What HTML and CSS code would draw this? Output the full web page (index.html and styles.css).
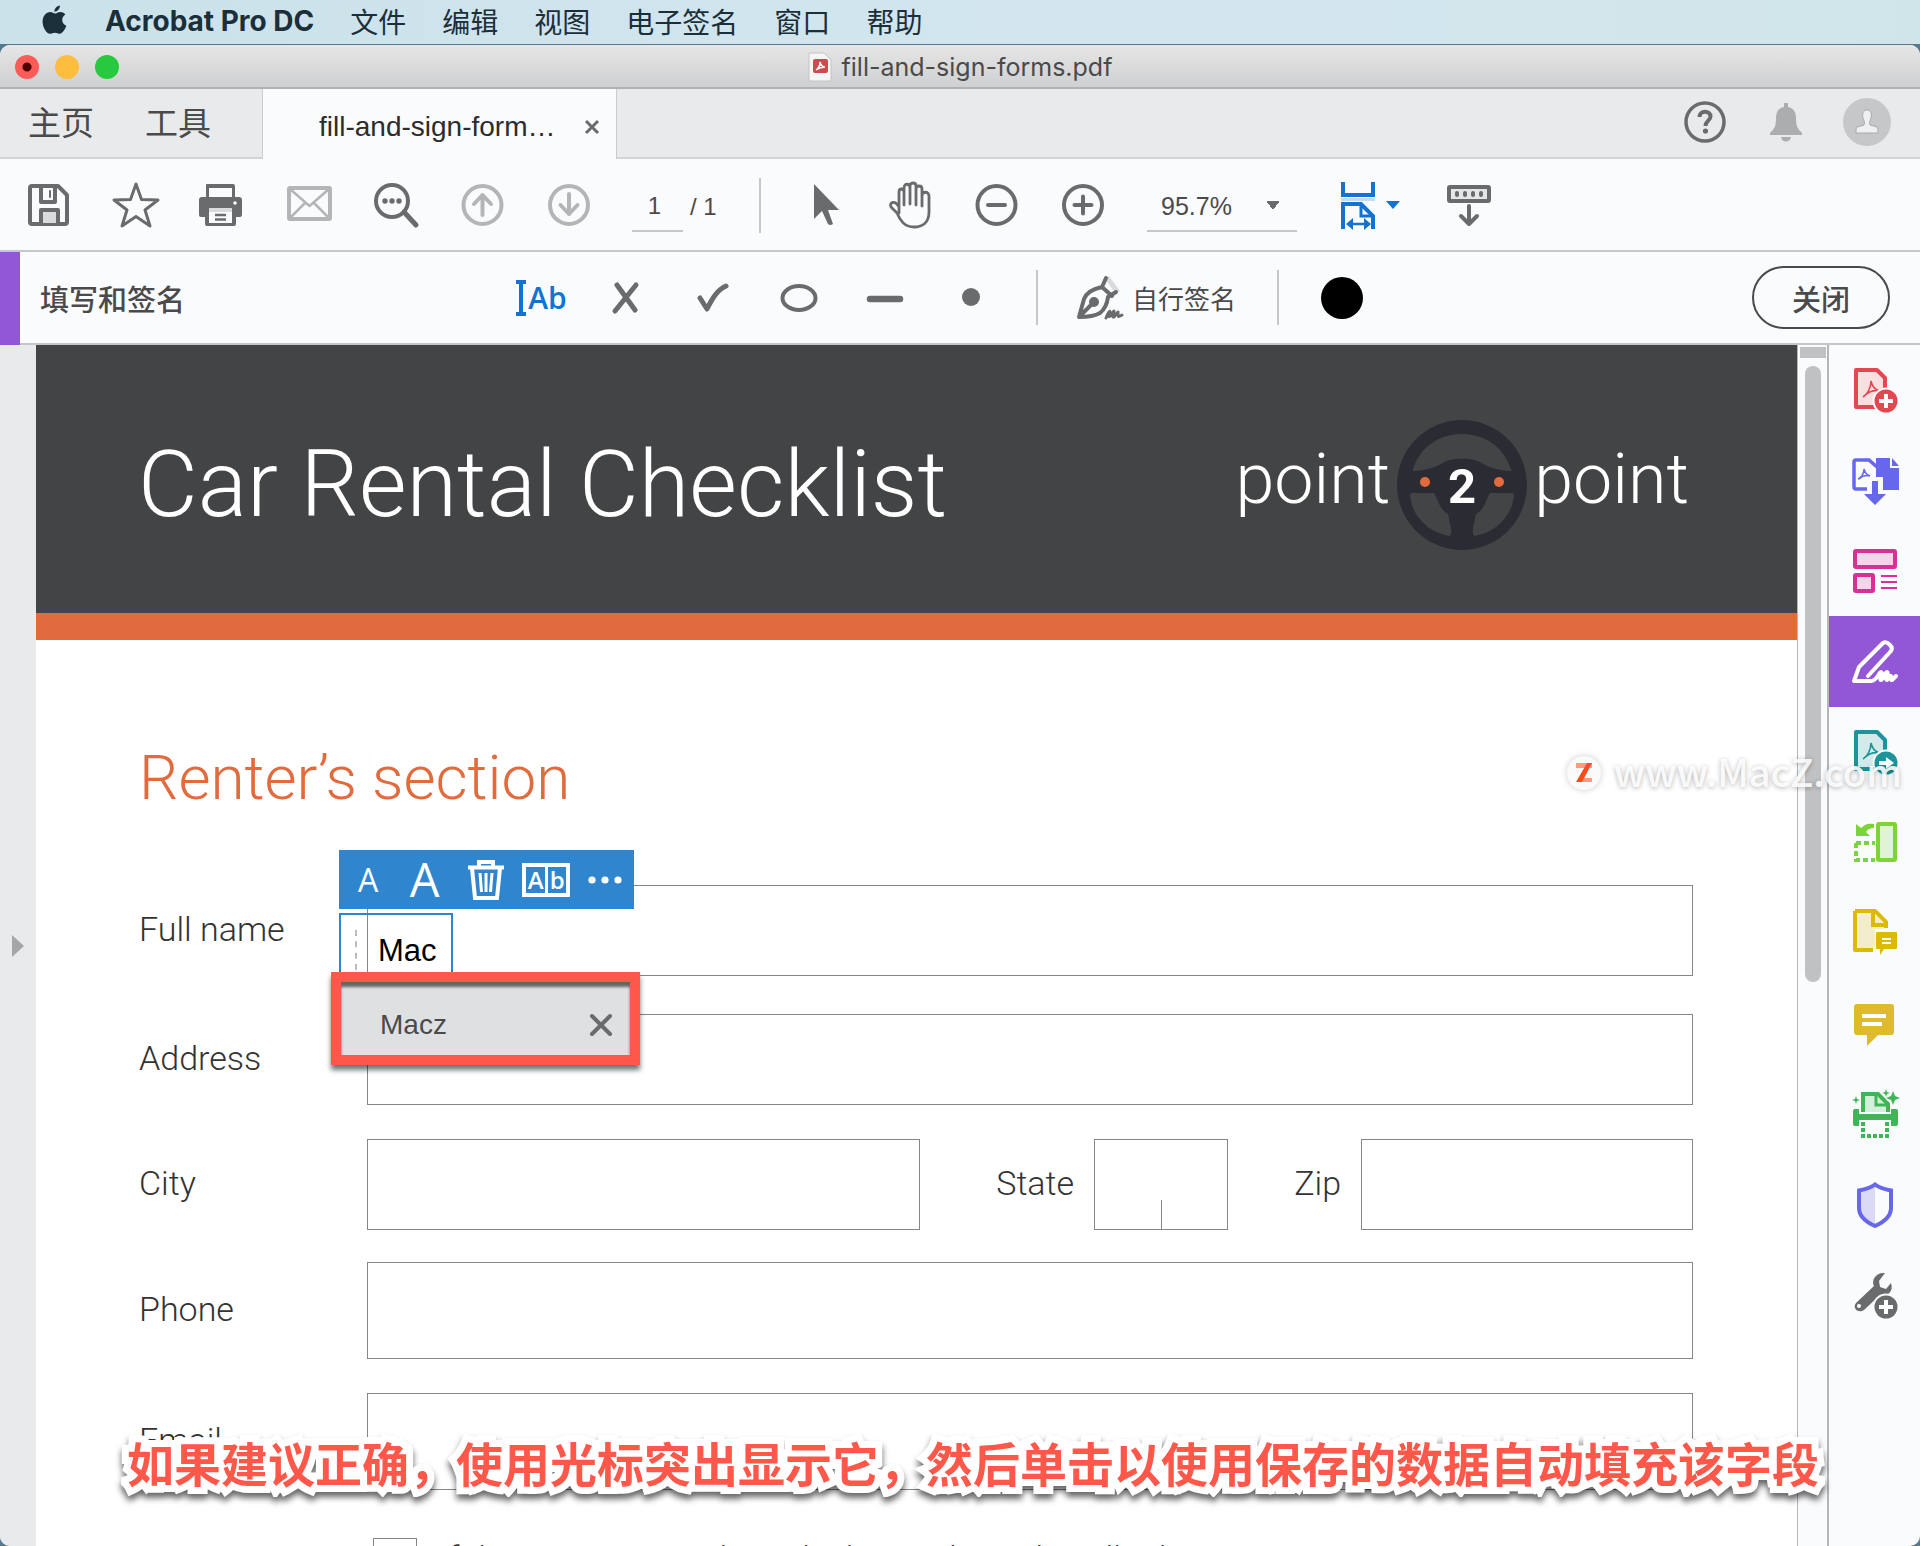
FILE: index.html
```html
<!DOCTYPE html>
<html lang="zh-CN">
<head>
<meta charset="utf-8">
<title>fill-and-sign-forms.pdf</title>
<link rel="stylesheet" href="styles.css">
</head>
<body>
<nav class="menubar">
  <svg class="apple" viewBox="0 0 26 30" aria-hidden="true"><path d="M13.500 8.300c1.500 0 3-1.700 5.600-1.700 2.400 0 4.200 1.200 5.200 2.800-4.800 3-4.200 9.500 1 11.700-1.200 3.600-4 8.300-6.900 8.300-1.800 0-2.700-1.100-5-1.100s-3.300 1.100-5 1.100C4.600 29.400.6 22.600.6 16.900c0-6.200 3.900-10.200 8-10.200 2.200 0 3.700 1.600 4.900 1.600zM12.900 6.500C12.700 3.300 15.600.4 18.600 0c.4 3.300-2.600 6.500-5.700 6.500z" fill="#1b2f3a"/></svg>
  <b>Acrobat Pro DC</b><a href="#">文件</a><a href="#">编辑</a><a href="#">视图</a><a href="#">电子签名</a><a href="#">窗口</a><a href="#">帮助</a>
</nav>
<div class="window">
  <header class="titlebar">
    <div class="lights"><i class="red"></i><i class="yellow"></i><i class="green"></i></div>
    <div class="doc-title">
      <svg width="24" height="30" viewBox="0 0 24 30" aria-hidden="true"><path d="M1 1h15l7 7v21H1z" fill="#f5f5f5" stroke="#c4c4c4"/><rect x="5" y="7" width="15" height="14" rx="2" fill="#cf4a4e"/><path d="M8 18c3-2 4-5 4-8 1 4 3 5 5 5-3 0-6 1-9 3z" fill="none" stroke="#fff" stroke-width="1.500"/></svg>
      <span>fill-and-sign-forms.pdf</span>
    </div>
  </header>

  <div class="tabs">
    <div class="tabs-home"><a href="#">主页</a><a href="#">工具</a></div>
    <div class="tab"><span>fill-and-sign-form…</span>
      <button aria-label="Close tab"><svg width="16" height="16" viewBox="0 0 16 16"><path d="M2 2l12 12M14 2L2 14" stroke="#6a6b6c" stroke-width="3"/></svg></button>
    </div>
    <div class="tabs-right">
      <button aria-label="Help"><svg class="ic" viewBox="0 0 48 48"><circle cx="24" cy="24" r="19" fill="none" stroke="#6a6b6c" stroke-width="3.500"/><path d="M18.500 19c0-7 11-7 11-.5 0 4-5 4.500-5 9.500" fill="none" stroke="#6a6b6c" stroke-width="4"/><circle cx="24.500" cy="33" r="2.600" fill="#6a6b6c"/></svg></button>
      <button aria-label="Notifications"><svg class="ic" viewBox="0 0 48 48"><path d="M22 5h4v4c6 1 8 6 8 11 0 9 2 11 6 15v2H8v-2c4-4 6-6 6-15 0-5 2-10 8-11zM19 39h10c-1 6-9 6-10 0z" fill="#acadaf"/></svg></button>
      <button aria-label="Account"><svg class="ic" viewBox="0 0 48 48"><circle cx="24" cy="24" r="24" fill="#c6c7c9"/><path d="M24 12c-4 0-5 4-4 8 1 3 2 4 1 7l-7 2c-1 1-1 3-1 6h22c0-3 0-5-1-6l-7-2c-1-3 0-4 1-7 1-4 0-8-4-8z" fill="#eff0f1" stroke="#aaa"/></svg></button>
    </div>
  </div>

  <div class="toolbar">
    <div class="group">
      <button aria-label="Save"><svg class="ic g" viewBox="0 0 48 48"><path d="M8 5h26l9 9v27a2 2 0 0 1-2 2H8a2 2 0 0 1-2-2V7a2 2 0 0 1 2-2z"/><path d="M17 6v15h14V6M17 43V29h17v14"/><path d="M19 31h13v11H19z" fill="#dadbdc" stroke="none"/><path d="M26 10v6" stroke-width="2"/></svg></button>
      <button aria-label="Star"><svg class="ic g" viewBox="0 0 48 48"><path d="M25 3l5.500 15.500L47 19 34 29l5 16-14-9.500L11 45l5-16L3 19l16.500-.5z" stroke-width="3"/></svg></button>
      <button aria-label="Print"><svg class="ic" viewBox="0 0 48 48"><path d="M8 4q0-1 1-1h26q2 0 2 2v11h4a3 3 0 0 1 3 3v15a2 2 0 0 1-2 2h-4v7a2 2 0 0 1-2 2H9a2 2 0 0 1-2-2v-7H3a2 2 0 0 1-2-2V19a3 3 0 0 1 3-3h4V5z" fill="#6a6b6c"/><path d="M11 7h23v9H11zM11 28h23v14H11z" fill="#fafbfd"/><path d="M11 27h23v4H11z" fill="#dadbdc"/><path d="M17 34h11M17 38.500h11" stroke="#6a6b6c" stroke-width="2.500"/><circle cx="37" cy="22" r="1.800" fill="#fff"/></svg></button>
      <button aria-label="Mail"><svg class="ic g pale" viewBox="0 0 48 48"><rect x="4" y="7" width="41" height="31" rx="1"/><path d="M5 8l19.500 17L44 8M5 37l15-15M44 37L29 22" stroke-width="2.500"/></svg></button>
      <button aria-label="Search"><svg class="ic g" viewBox="0 0 48 48"><circle cx="20" cy="20" r="16" stroke-width="4"/><path d="M32 31l12 13" stroke-width="5"/><g fill="#6a6b6c" stroke="none"><circle cx="13" cy="20" r="2.700"/><circle cx="20" cy="20" r="2.700"/><circle cx="27" cy="20" r="2.700"/></g></svg></button>
      <button aria-label="Previous page"><svg class="ic g pale" viewBox="0 0 48 48"><circle cx="23.500" cy="24" r="19"/><path d="M23.500 34V14M15 23l8.500-9 8.500 9" stroke-width="4"/></svg></button>
      <button aria-label="Next page"><svg class="ic g pale" viewBox="0 0 48 48"><circle cx="23" cy="24" r="19"/><path d="M23 13v20M14.500 24l8.500 9 8.500-9" stroke-width="4"/></svg></button>
    </div>
    <div class="pager"><input aria-label="Page" value="1"><span>/ 1</span></div>
    <div class="sep"></div>
    <div class="group">
      <button aria-label="Select"><svg class="ic" viewBox="0 0 48 48"><path d="M13 3v35l8-8 6 13q2 2 5 0l-5-14h11z" fill="#6a6b6c"/></svg></button>
      <button aria-label="Hand"><svg class="ic g" viewBox="0 0 48 48"><path d="M12 28V11c0-4 5-4 5 0v13V7c0-5 6-5 6 0v16V5c0-4 6-4 6 0v19V8c0-4 6-4 6 0v17V15c0-5 7-5 7 0v16c0 10-6 15-15 15-10 0-14-7-17-14L4 26c-2-5 4-7 8 0v6" stroke-width="2.800"/></svg></button>
      <button aria-label="Zoom out"><svg class="ic g" viewBox="0 0 48 48"><circle cx="23.500" cy="24" r="19"/><path d="M15 24h17" stroke-width="4"/></svg></button>
      <button aria-label="Zoom in"><svg class="ic g" viewBox="0 0 48 48"><circle cx="24" cy="24" r="19"/><path d="M15.500 24h17M24 15.500v17" stroke-width="4"/></svg></button>
    </div>
    <select class="zoom" aria-label="Zoom level"><option>95.7%</option></select>
    <button class="fit" aria-label="Fit width"><svg width="64" height="48" viewBox="0 0 64 48"><path d="M6 1v13h30V1M6 48V23h18l12 12v13" fill="none" stroke="#1473d0" stroke-width="4"/><path d="M4 17h34v3H4z" fill="#c5dcf2"/><path d="M24 23v12h12" fill="none" stroke="#1473d0" stroke-width="3"/><path d="M14 43h14" stroke="#1473d0" stroke-width="2.500"/><path d="M16 37v12l-7-6zM27 37v12l7-6z" fill="#1473d0"/><path d="M49 20h14l-7 8z" fill="#1473d0"/></svg></button>
    <button class="keys" aria-label="Toolbar"><svg class="ic g" viewBox="0 0 48 48"><rect x="3" y="6" width="40" height="14" rx="1" fill="#e4e5e6"/><path d="M11 12v2M19 12v2M27 12v2M35 12v2" stroke-width="4"/><path d="M23 25v18M15 35l8 8 8-8"/></svg></button>
  </div>

  <div class="signbar">
    <h2>填写和签名</h2>
    <div class="group">
      <button class="add-text" aria-label="Add text"><svg width="12" height="38" viewBox="0 0 12 38"><path d="M1 3h10M1 35h10M6 3v32" stroke="#1473d0" stroke-width="4"/></svg>Ab</button>
      <button aria-label="Cross"><svg class="ic g" viewBox="0 0 48 48"><path d="M14 11l18 25M33 11L12 37" stroke-width="5"/></svg></button>
      <button aria-label="Check"><svg class="ic g" viewBox="0 0 48 48"><path d="M11 24l7 11C23 25 28 16 37 12" stroke-width="5"/></svg></button>
      <button aria-label="Circle"><svg class="ic g" viewBox="0 0 48 48"><ellipse cx="24" cy="24" rx="16.500" ry="12"/></svg></button>
      <button aria-label="Line"><svg class="ic g" viewBox="0 0 48 48"><path d="M9 25h30" stroke-width="6.500"/></svg></button>
      <button aria-label="Dot"><svg class="ic" viewBox="0 0 48 48"><circle cx="24" cy="23" r="9" fill="#6a6b6c"/></svg></button>
    </div>
    <div class="sep"></div>
    <button class="self-sign"><svg class="ic g" viewBox="0 0 48 48"><path d="M29 5l11 15 4-3L33 2z" fill="#dadbdc" stroke="none"/><path d="M30 4l-4 9C16 15 10 20 8 25L3 43c7 0 16-1 21-4 5-4 7-8 8-16l8-5M26 13l10 9M5 41l12-12" /><circle cx="18" cy="28" r="3" fill="#6a6b6c"/><path d="M30 44c2-5 4-8 4-6s-3 6 0 4l4-5c1 1-3 7 0 6l4-5c0 4-1 6 4 3" stroke-width="3"/></svg>自行签名</button>
    <div class="sep"></div>
    <button class="swatch" aria-label="Color"></button>
    <button class="close">关闭</button>
  </div>

  <main class="main">
    <button class="drawer" aria-label="Expand"><svg width="12" height="22" viewBox="0 0 12 22"><path d="M0 0l12 11L0 22z" fill="#a5a6a8"/></svg></button>
    <article class="page">
      <header class="banner">
        <h1>Car Rental Checklist</h1>
        <div class="logo"><span>point</span>
          <svg width="130" height="130" viewBox="0 0 130 130"><path fill="#2b2b33" fill-rule="evenodd" d="M65 0a65 65 0 1 1 0 130A65 65 0 1 1 65 0zM16 51q15 0 28-7c8-7 34-7 42 0q13 7 28 7 1 1 0-2C107 28 89 14 65 14S23 28 16 49zM15 73c-4 0 0 10 0 12 5 16 20 28 37 31q3-1 2-8L51 94C42 89 41 79 37 73zM115 73c4 0 0 10 0 12-5 16-20 28-37 31q-3-1-2-8l3-14c9-5 10-15 14-21z"/><circle cx="28" cy="62" r="5" fill="#e26b3e"/><circle cx="102" cy="62" r="5" fill="#e26b3e"/><text x="65" y="83" text-anchor="middle" class="two">2</text></svg>
          <span>point</span></div>
      </header>
      <form class="form">
        <h2>Renter’s section</h2>
        <div class="row"><label for="name">Full name</label>
          <div class="cell"><input class="field" id="name">
            <div class="pop">
              <div class="pop-tools">
                <button type="button" class="a-small" aria-label="Smaller text">A</button><button type="button" class="a-big" aria-label="Larger text">A</button>
                <button type="button" aria-label="Delete"><svg width="38" height="42" viewBox="0 0 38 42" fill="none" stroke="#fff" stroke-width="4"><path d="M1 8.500h36M12 8V3h14v5M5 9l3 30h22l3-30"/><path d="M13 14l1.500 19M19 14v19M25 14l-1.500 19" stroke-width="3"/></svg></button>
                <button type="button" class="comb" aria-label="Comb"><span>A</span><span>b</span></button>
                <button type="button" aria-label="More"><svg width="34" height="8" viewBox="0 0 34 8" fill="#fff"><circle cx="4" cy="4" r="3.600"/><circle cx="17" cy="4" r="3.600"/><circle cx="30" cy="4" r="3.600"/></svg></button>
              </div>
              <div class="typed"><input aria-label="Typed text" value="Mac"></div>
              <div class="suggest"><span>Macz</span><button type="button" aria-label="Remove"><svg width="22" height="22" viewBox="0 0 22 22"><path d="M2 2l18 18M20 2L2 20" stroke="#6a6b6c" stroke-width="4" stroke-linecap="round"/></svg></button></div>
            </div>
          </div>
        </div>
        <div class="row gap-l"><label for="address">Address</label><input class="field" id="address"></div>
        <div class="row city gap-m"><label for="city">City</label><input class="field" id="city"><label class="mid" for="state">State</label><div class="state"><input class="field" id="state"></div><label class="mid" for="zip">Zip</label><input class="field" id="zip"></div>
        <div class="row tall gap-s"><label for="phone">Phone</label><input class="field" id="phone"></div>
        <div class="row tall gap-m"><label for="email">Email</label><input class="field" id="email"></div>
        <div class="agree"><input type="checkbox" id="agree"><label for="agree">If the renter is not the only driver, please list all other</label></div>
      </form>
    </article>
    <div class="scroll"><i class="split"></i><i class="thumb"></i></div>
    <aside class="rail">
      <button aria-label="Create PDF"><svg class="ic" viewBox="0 0 48 48"><path d="M5 4h21l8 8v29H5z" fill="#f9dfe0" stroke="#e34850" stroke-width="4" stroke-linejoin="round"/><path d="M12 31c4-2 8-9 8-16 1 5 4 9 9 10-5-1-11 0-16 5" fill="none" stroke="#e34850" stroke-width="1.600"/><circle cx="35" cy="35" r="13.500" fill="#fafbfd"/><circle cx="35" cy="35" r="11.500" fill="#e34850"/><path d="M28 35h14M35 28v14" stroke="#fff" stroke-width="4"/></svg></button>
      <button aria-label="Combine"><svg class="ic" viewBox="0 0 48 48"><path d="M16 32H5a2 2 0 0 1-2-2V5a2 2 0 0 1 2-2h13l8 7" fill="none" stroke="#6767ec" stroke-width="3.500"/><path d="M7 22c3-1 6-5 6-10 1 4 3 6 6 7-4-1-8 0-11 3" fill="none" stroke="#6767ec" stroke-width="1.500"/><path d="M25 1h14v10h9v22H32V20h-7zM41 1l7 8h-7z" fill="#6767ec"/><path d="M21 24h6v13h8L24 48 13 37h8z" fill="#6767ec"/></svg></button>
      <button aria-label="Organize"><svg class="ic" viewBox="0 0 48 48"><g fill="#f6d5ea" stroke="#dc2f95" stroke-width="4"><rect x="4" y="4" width="40" height="16" rx="1"/><rect x="4" y="28" width="18" height="16" rx="1"/></g><path d="M30 29h16M30 35h16M30 41h16" stroke="#dc2f95" stroke-width="2"/></svg></button>
      <button class="active" aria-label="Fill and sign"><svg class="ic" viewBox="0 0 48 48" fill="none" stroke="#fff" stroke-width="4" stroke-linejoin="round" stroke-linecap="round"><path d="M17 38L40 13q2-3-1-6-4-4-7-2L8 29 3 43h17c6 0 8-9 10-9s-2 8 0 8 4-8 6-8-2 8 0 8l3-4c2-2 0 5 2 4l4-4"/></svg></button>
      <button aria-label="Export PDF"><svg class="ic" viewBox="0 0 48 48"><path d="M5 4h21l8 8v29H5z" fill="#d3e9ea" stroke="#1c9499" stroke-width="4" stroke-linejoin="round"/><path d="M12 31c4-2 8-9 8-16 1 5 4 9 9 10-5-1-11 0-16 5" fill="none" stroke="#1c9499" stroke-width="1.600"/><circle cx="35" cy="35" r="13.500" fill="#fafbfd"/><circle cx="35" cy="35" r="11.500" fill="#1c9499"/><path d="M28 33h7v-4l8 6-8 6v-4h-7z" fill="#fff"/></svg></button>
      <button aria-label="Pages"><svg class="ic" viewBox="0 0 48 48"><rect x="27" y="5" width="17" height="36" rx="1" fill="#e0f3d3" stroke="#7dd33c" stroke-width="4"/><path d="M5 5l5 4c4-4 7-5 13-4v4c-4 0-6 1-8 4l4 4H5z" fill="#7dd33c"/><path d="M5 24v17h19M5 24h19" fill="none" stroke="#7dd33c" stroke-width="4" stroke-dasharray="5 3"/></svg></button>
      <button aria-label="Review"><svg class="ic" viewBox="0 0 48 48"><path d="M4 2h20l11 11v6M22 41H4V2" fill="none" stroke="#dcba00" stroke-width="4" stroke-linejoin="round"/><path d="M6 4h17l10 11v5H24v19H6z" fill="#f3edcc"/><path d="M22 3v13h12" fill="none" stroke="#dcba00" stroke-width="4"/><path d="M26 23h19q1 0 1 1v15q0 1-1 1H33l-4 6v-6h-3q-1 0-1-1V24z" fill="#dcba00"/><path d="M31 30h9M31 34h9" stroke="#fff" stroke-width="2"/></svg></button>
      <button aria-label="Comment"><svg class="ic" viewBox="0 0 48 48"><path d="M6 4h34q3 0 3 3v25q0 3-3 3H27L16 46V35H6q-3 0-3-3V7q0-3 3-3z" fill="#dfbb2c"/><path d="M11 16h24M11 24h20" stroke="#fff" stroke-width="4"/></svg></button>
      <button aria-label="Scan"><svg class="ic" viewBox="0 0 48 48"><path d="M12 22V4h15l10 10v8" fill="#d3efda" stroke="#40b558" stroke-width="4"/><path d="M25 4v11h11" fill="none" stroke="#40b558" stroke-width="3"/><path d="M3 19h5v5h32v-5h5q2 0 2 2v12q0 3-2 3h-5v-6H8v6H4q-2 0-2-2V21z" fill="#40b558"/><path d="M12 32v14h24V32" fill="none" stroke="#40b558" stroke-width="4" stroke-dasharray="4 2"/><path d="M42 1l2 5 5 2-5 2-2 5-2-5-5-2 5-2zM5 6l1 3 3 1-3 1-1 3-1-3-3-1 3-1zM35-1l1 3 3 1-3 1-1 3-1-3-3-1 3-1z" fill="#40b558"/></svg></button>
      <button aria-label="Protect"><svg class="ic" viewBox="0 0 48 48"><path d="M24 4v40C14 40 8 35 8 26V10c6 0 11-2 16-6z" fill="#dadaf7"/><path d="M24 3.500c5 4 10 5 16 6V27c0 9-7 14-16 18C15 41 8 36 8 27V9.500c6-1 11-2 16-6z" fill="none" stroke="#6767ec" stroke-width="4"/></svg></button>
      <button aria-label="More tools"><svg class="ic" viewBox="0 0 48 48"><path d="M34 2c-9-1-14 7-11 13L5 32c-4 5 2 11 8 7l16-15c7 2 14-3 11-12l-5 6-6-2-1-6z" fill="#6a6b6c"/><circle cx="8" cy="35" r="2" fill="#fff"/><circle cx="35" cy="36" r="13.500" fill="#fafbfd"/><circle cx="35" cy="36" r="11.500" fill="#6a6b6c"/><path d="M28 36h14M35 29v14" stroke="#fff" stroke-width="4"/></svg></button>
    </aside>
  </main>
</div>
<div class="watermark"><svg width="38" height="38" viewBox="0 0 38 38"><circle cx="19" cy="19" r="17" fill="#fafafa"/><path d="M11 9h16v5H11z M13 24h14v4H13z" fill="#ff9a80"/><path d="M22 9h5l-10 19h-6z" fill="#fb4a1c"/></svg><span>www.MacZ.com</span></div>
<p class="caption">如果建议正确，使用光标突出显示它，然后单击以使用保存的数据自动填充该字段</p>
</body>
</html>
```
FILE: styles.css
```css
* { box-sizing: border-box; }
body {
  margin: 0;
  height: 100vh;
  display: flex;
  flex-direction: column;
  overflow: hidden;
  position: relative;
  background: #55798f;
  color: #4a4a4b;
  font-family: "Liberation Sans", "Noto Sans CJK SC", sans-serif;
}
button, input, select { font: inherit; color: inherit; margin: 0; padding: 0; border: 0; background: none; outline: none; }
button { display: flex; align-items: center; justify-content: center; flex: none; }
a { color: inherit; text-decoration: none; }
h1, h2, p { margin: 0; font-weight: 300; }
svg { display: block; flex: none; overflow: visible; }
.ic { width: 48px; height: 48px; }
.g { fill: none; stroke: #6a6b6c; stroke-width: 4; stroke-linecap: round; stroke-linejoin: round; }
.pale { stroke: #b4b5b7; }

.menubar {
  height: 44px;
  flex: none;
  display: flex;
  align-items: center;
  gap: 36px;
  padding: 0 0 2px 42px;
  background: linear-gradient(90deg, #cbe2eb, #d3e6ee 60%, #d0e5ea);
  color: #1b2f3a;
  font: 28px "Inter", "Noto Sans CJK SC", sans-serif;
}
.apple { width: 25px; height: 30px; margin: 0 2px 2px 0; }
.menubar b { font-weight: 700; }

.window {
  flex: 1;
  min-height: 0;
  margin-top: 1px;
  display: flex;
  flex-direction: column;
  border-radius: 10px;
  overflow: hidden;
  background: #fafbfd;
}
.titlebar {
  height: 44px;
  flex: none;
  display: grid;
  grid-template-columns: 1fr auto 1fr;
  align-items: center;
  padding-top: 2px;
  background: linear-gradient(#e6e6e7, #cfd0d1);
  border-bottom: 2px solid #b0b1b3;
}
.lights { display: flex; gap: 16px; padding-left: 15px; }
.lights i { width: 24px; height: 24px; border-radius: 50%; }
.red { background: radial-gradient(circle, #4d0000 4px, #fc5b57 5px); }
.yellow { background: #fdbe3f; }
.green { background: #27c93f; }
.doc-title { display: flex; align-items: center; gap: 10px; font: 25px "Inter", sans-serif; }

.tabs { height: 70px; flex: none; display: flex; background: #e9eaeb; }
.tabs-home { width: 262px; display: flex; align-items: center; gap: 51px; padding: 0 0 5px 28px; font-size: 33px; border-bottom: 2px solid #d3d4d5; }
.tab {
  width: 355px;
  display: flex;
  align-items: center;
  justify-content: space-between;
  padding: 6px 16px 0 56px;
  background: #fafbfd;
  border: solid #cbccce;
  border-width: 0 1px;
  color: #2c2c2d;
  font-size: 28px;
}
.tabs-right { flex: 1; display: flex; justify-content: flex-end; align-items: center; gap: 33px; padding: 0 29px 2px 0; border-bottom: 2px solid #d3d4d5; }

.toolbar, .signbar { height: 93px; flex: none; display: flex; align-items: center; border-bottom: 2px solid #c6c7c9; }
.toolbar { padding: 1px 0 0 24px; }
.group { display: flex; gap: 39px; }
.group button { width: 48px; height: 48px; }
.pager { display: flex; align-items: center; gap: 7px; margin-left: 38px; font-size: 24px; }
.pager input { width: 51px; height: 54px; padding: 4px 6px 0 0; text-align: center; border-bottom: 2px solid #c6c7c9; }
.pager span { width: 29px; padding-top: 4px; white-space: nowrap; }
.sep { width: 2px; height: 55px; flex: none; background: #c6c7c9; }
.toolbar .sep { margin: 0 40px; }
.toolbar .sep + .group { gap: 38px; }
.zoom {
  width: 150px;
  height: 54px;
  margin-left: 40px;
  padding: 4px 14px 0;
  appearance: none;
  border-bottom: 2px solid #c6c7c9;
  border-radius: 0;
  font-size: 25px;
  background: conic-gradient(from -37deg at 50% 100%, #6a6b6c 74deg, transparent 0) 119px 23px / 14px 9px no-repeat;
}
.fit { margin-left: 40px; }
.keys { margin-left: 45px; }

.signbar { border: 0; box-shadow: inset 20px 0 #9157d6, inset 0 -2px #c6c7c9; padding: 0 30px 2px 40px; }
.signbar h2 { width: 477px; font-size: 29px; font-weight: 500; font-family: "Noto Sans CJK SC", sans-serif; }
.signbar .group { gap: 38px; }
.add-text { gap: 1px; color: #1473d0; font: 600 30px "Open Sans", sans-serif; }
.signbar .sep { margin-left: 41px; }
.self-sign { margin-left: 38px; gap: 8px; font-size: 26px; }
.swatch { width: 42px; height: 42px; margin-left: 42px; border-radius: 50%; background: #000; }
.close { width: 138px; height: 63px; margin-left: auto; border: 2px solid #4a4a4b; border-radius: 32px; font: 500 29px "Noto Sans CJK SC", sans-serif; }

.main { flex: 1; min-height: 0; display: flex; }
.drawer { width: 36px; background: #e9eaec; }
.page { flex: 1; min-width: 0; overflow: hidden; background: #fff; }
.banner {
  height: 295px;
  display: flex;
  justify-content: space-between;
  align-items: center;
  padding: 12px 108px 0 102px;
  background: #434445;
  border-bottom: 27px solid #e26b3e;
  color: #fff;
  font-family: "Roboto", sans-serif;
}
.banner h1 { font-size: 92px; line-height: 108px; }
.logo { display: flex; align-items: center; gap: 7px; font-size: 70px; font-weight: 300; line-height: 80px; }
.logo span { padding-bottom: 12px; }
.two { fill: #fff; font: 700 49px "Roboto", sans-serif; }

.form { padding: 100px 104px 0 103px; }
.form h2 { color: #e26b3e; font: 300 62px/76px "Roboto", sans-serif; margin-bottom: 69px; }
.row { display: grid; grid-template-columns: 228px 1fr; align-items: center; height: 91px; }
.row label, .agree label { font: 300 34px/40px "Roboto", sans-serif; color: #333; }
.row label { padding-bottom: 4px; }
.tall { height: 97px; }
.gap-l { margin-top: 38px; }
.gap-m { margin-top: 34px; }
.gap-s { margin-top: 32px; }
.city { grid-template-columns: 228px 5fr 174px 134px 133px 3fr; }
.mid { text-align: right; padding-right: 20px; }
.field { display: block; width: 100%; min-width: 0; height: 100%; border: 1px solid #858687; font-size: 31px; }
.cell, .state { position: relative; height: 100%; }
.state::after { content: ""; position: absolute; left: 50%; bottom: 0; width: 1px; height: 30px; background: #858687; }
.agree { display: flex; gap: 22px; padding: 48px 0 0 234px; }
.agree input { appearance: none; flex: none; width: 44px; height: 44px; border: 1px solid #858687; }
.agree label { white-space: nowrap; }

/* Floating text tools over the name field */
.pop { position: absolute; left: -36px; top: -35px; width: 309px; z-index: 2; display: flex; flex-direction: column; align-items: flex-start; }
.pop-tools { width: 295px; height: 59px; margin-left: 8px; display: flex; align-items: center; justify-content: space-between; padding: 0 12px 0 19px; background: #2f86cf; color: #fff; font: 32px "Open Sans", sans-serif; }
.pop-tools .a-big { font-size: 47px; line-height: 59px; margin-left: 14px; }
.pop-tools button:nth-child(3) { margin-left: 10px; }
.pop-tools .comb { width: 48px; height: 34px; border: 4px solid #fff; font-size: 24px; font-weight: 600; }
.comb span { flex: 1; height: 26px; line-height: 25px; }
.comb span + span { border-left: 3px solid #fff; }
.typed { width: 114px; height: 72px; margin: 4px 0 0 8px; border: 2px solid #2f86cf; display: flex; align-items: center; padding: 14px 0 12px 14px; }
.typed input { width: 96px; height: 40px; padding: 2px 0 0 21px; border-left: 2px dashed #bcbcbc; color: #000; font-size: 31px; }
.suggest {
  width: 309px;
  height: 93px;
  margin-top: -13px;
  display: flex;
  align-items: center;
  justify-content: space-between;
  padding: 13px 18px 0 39px;
  border: 10px solid #ff584b;
  background: #dfe0e2;
  box-shadow: 0 5px 5px rgba(0,0,0,.55), inset 0 5px 3px rgba(0,0,0,.55);
  font-size: 28px;
}

.scroll { width: 32px; flex: none; display: flex; flex-direction: column; align-items: center; gap: 8px; padding-top: 2px; border: solid #b5b6b8; border-width: 0 2px 0 1px; background: #fafbfd; }
.split { width: 26px; height: 11px; background: #c0c1c3; }
.thumb { width: 16px; height: calc(51% + 5px); border-radius: 8px; background: #c0c1c3; }
.rail { width: 91px; flex: none; overflow: hidden; }
.rail button { width: 100%; height: 90px; }
.rail button:nth-child(even) { height: 91px; }
.rail .active { background: #9157d6; }

.watermark { position: absolute; right: 18px; top: 744px; display: flex; align-items: center; gap: 11px; color: rgba(255,255,255,.9); font: 500 38px/54px "Noto Sans CJK SC", sans-serif; text-shadow: 0 1px 5px rgba(0,0,0,.3); }
.watermark svg { margin-top: 4px; filter: drop-shadow(0 0 3px rgba(0,0,0,.2)); }
.caption {
  position: absolute;
  left: 127px;
  bottom: 49px;
  white-space: nowrap;
  color: #ff584b;
  font: 700 47px/70px "Noto Sans CJK SC", sans-serif;
  -webkit-text-stroke: 14px #fff;
  paint-order: stroke fill;
  filter: drop-shadow(0 5px 3px rgba(0,0,0,.6));
}
```
